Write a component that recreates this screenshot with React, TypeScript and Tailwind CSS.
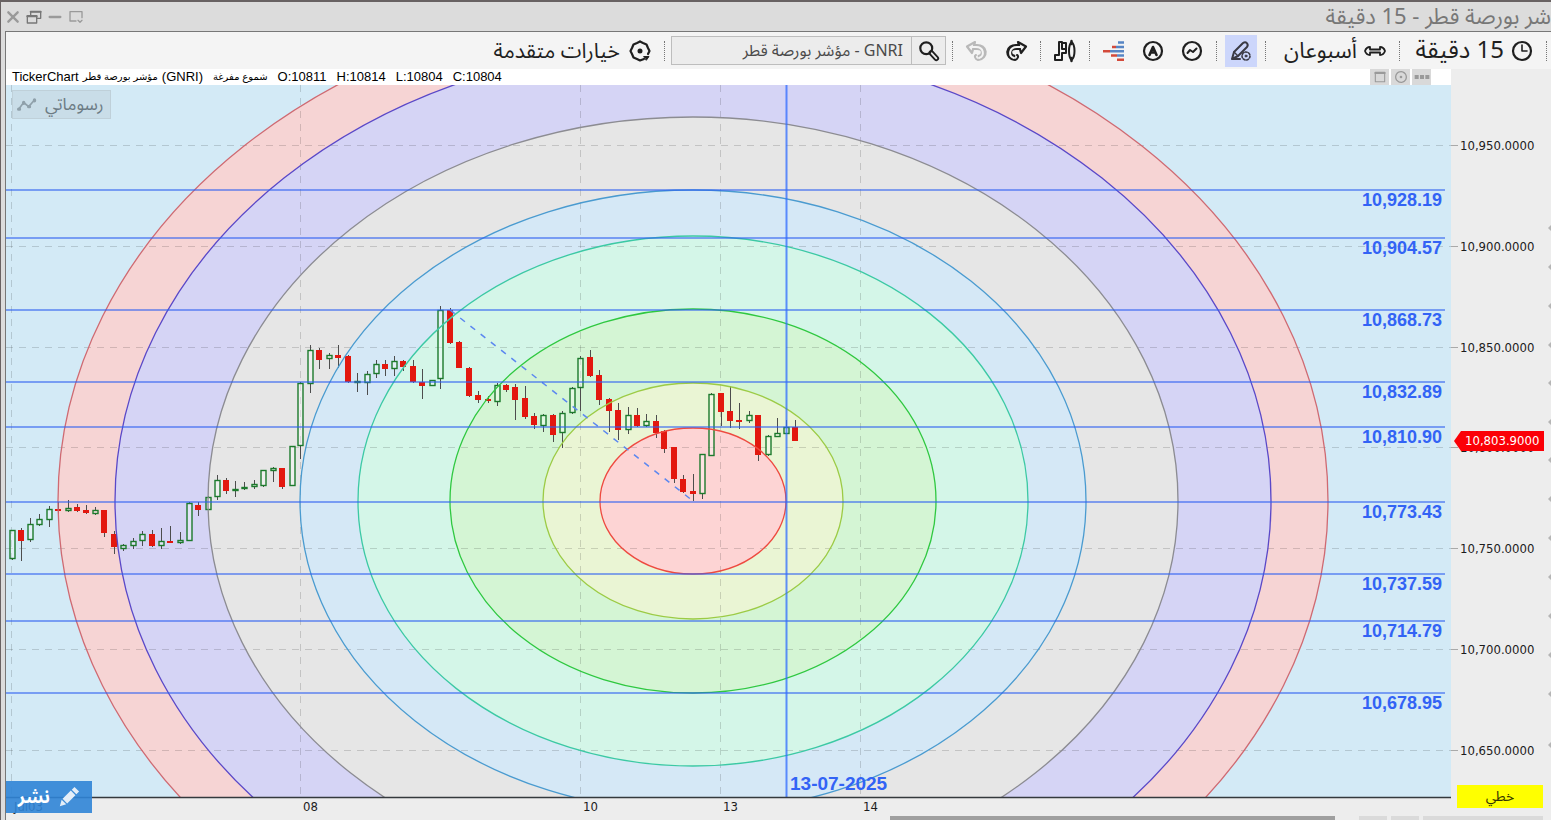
import type { ReactNode } from 'react';

// x, high, body top, body bottom, low, direction
type Candle = [number, number, number, number, number, 'u' | 'd'];

interface Ring {
  rx: number;
  ry: number;
  fill: string;
  stroke: string;
}

const CENTER = { x: 693, y: 501 };

const rings: Ring[] = [
  { rx: 635, ry: 502, fill: '#f6d4d4', stroke: '#cf6a72' },
  { rx: 578, ry: 457, fill: '#d5d4f5', stroke: '#5a48c8' },
  { rx: 485, ry: 384, fill: '#e6e6e6', stroke: '#8c8c92' },
  { rx: 393, ry: 311, fill: '#d5e8f6', stroke: '#4a9bd0' },
  { rx: 335, ry: 265, fill: '#d4f6e8', stroke: '#3cc9a4' },
  { rx: 243, ry: 192, fill: '#d4f5d4', stroke: '#2fc840' },
  { rx: 150, ry: 118, fill: '#eaf5d4', stroke: '#9ccb45' },
  { rx: 93, ry: 73, fill: '#fdd4d4', stroke: '#ee4a40' },
];

const levels = [
  { y: 190, label: '10,928.19' },
  { y: 238, label: '10,904.57' },
  { y: 310, label: '10,868.73' },
  { y: 382, label: '10,832.89' },
  { y: 427, label: '10,810.90' },
  { y: 502, label: '10,773.43' },
  { y: 574, label: '10,737.59' },
  { y: 621, label: '10,714.79' },
  { y: 693, label: '10,678.95' },
];

const prices = [
  { y: 146, label: '10,950.0000' },
  { y: 247, label: '10,900.0000' },
  { y: 348, label: '10,850.0000' },
  { y: 448, label: '10,800.0000' },
  { y: 549, label: '10,750.0000' },
  { y: 650, label: '10,700.0000' },
  { y: 751, label: '10,650.0000' },
];

const days = [
  { x: 12, label: 'Jul03' },
  { x: 301, label: '08' },
  { x: 581, label: '10' },
  { x: 721, label: '13' },
  { x: 861, label: '14' },
];

const candles: Candle[] = [
  [12, 530, 530, 559, 560, 'u'],
  [21, 528, 530, 541, 561, 'd'],
  [30, 518, 524, 540, 542, 'u'],
  [39, 514, 519, 525, 526, 'u'],
  [49, 506, 509, 520, 527, 'u'],
  [58, 502, 509, 511, 514, 'd'],
  [68, 500, 508, 511, 512, 'u'],
  [77, 504, 507, 511, 512, 'd'],
  [86, 505, 510, 513, 514, 'd'],
  [95, 507, 510, 514, 515, 'u'],
  [104, 510, 510, 533, 537, 'd'],
  [114, 531, 534, 547, 554, 'd'],
  [123, 544, 545, 549, 551, 'u'],
  [133, 538, 541, 546, 549, 'u'],
  [142, 531, 534, 541, 546, 'u'],
  [152, 530, 534, 546, 547, 'd'],
  [161, 528, 541, 546, 549, 'u'],
  [170, 526, 541, 543, 543, 'd'],
  [180, 532, 540, 543, 544, 'u'],
  [189, 502, 503, 541, 541, 'u'],
  [198, 502, 505, 510, 516, 'd'],
  [208, 496, 497, 510, 510, 'u'],
  [217, 475, 480, 497, 500, 'u'],
  [226, 478, 480, 491, 494, 'd'],
  [235, 481, 489, 491, 497, 'u'],
  [244, 482, 487, 488, 490, 'u'],
  [254, 480, 484, 487, 489, 'u'],
  [263, 470, 470, 486, 487, 'u'],
  [273, 467, 468, 471, 482, 'u'],
  [282, 468, 468, 487, 489, 'd'],
  [292, 446, 446, 486, 486, 'u'],
  [300, 382, 383, 446, 459, 'u'],
  [310, 345, 350, 384, 393, 'u'],
  [319, 348, 350, 360, 369, 'd'],
  [329, 353, 355, 359, 369, 'u'],
  [338, 345, 355, 358, 368, 'd'],
  [348, 355, 356, 382, 383, 'd'],
  [357, 373, 381, 383, 392, 'u'],
  [367, 371, 374, 383, 395, 'u'],
  [376, 360, 364, 374, 378, 'u'],
  [385, 360, 364, 369, 376, 'd'],
  [394, 356, 361, 369, 376, 'u'],
  [403, 360, 361, 367, 371, 'd'],
  [413, 360, 366, 382, 383, 'd'],
  [422, 369, 382, 386, 399, 'd'],
  [432, 380, 380, 386, 386, 'u'],
  [440, 306, 310, 379, 389, 'u'],
  [450, 308, 310, 343, 344, 'd'],
  [459, 341, 342, 368, 368, 'd'],
  [469, 367, 368, 396, 397, 'd'],
  [478, 391, 395, 400, 403, 'd'],
  [488, 396, 399, 401, 403, 'd'],
  [497, 383, 385, 402, 406, 'u'],
  [506, 384, 385, 390, 392, 'd'],
  [515, 384, 387, 400, 420, 'd'],
  [525, 386, 398, 417, 419, 'd'],
  [534, 413, 416, 425, 429, 'd'],
  [543, 414, 415, 426, 432, 'u'],
  [553, 414, 415, 435, 442, 'd'],
  [562, 411, 413, 433, 448, 'u'],
  [572, 387, 388, 413, 414, 'u'],
  [580, 356, 358, 388, 411, 'u'],
  [590, 350, 357, 376, 377, 'd'],
  [599, 370, 375, 400, 405, 'd'],
  [609, 398, 399, 411, 432, 'd'],
  [618, 403, 410, 430, 440, 'd'],
  [628, 407, 415, 430, 434, 'u'],
  [637, 408, 415, 426, 427, 'd'],
  [646, 414, 421, 426, 427, 'u'],
  [656, 415, 421, 433, 438, 'd'],
  [664, 430, 431, 449, 453, 'd'],
  [674, 447, 447, 479, 483, 'd'],
  [683, 475, 479, 492, 493, 'd'],
  [693, 474, 491, 494, 501, 'd'],
  [702, 454, 454, 494, 499, 'u'],
  [711, 393, 394, 456, 456, 'u'],
  [721, 393, 393, 412, 426, 'd'],
  [730, 386, 411, 421, 428, 'd'],
  [739, 403, 420, 422, 429, 'd'],
  [749, 411, 415, 421, 423, 'u'],
  [758, 415, 415, 455, 461, 'd'],
  [768, 435, 436, 455, 456, 'u'],
  [777, 418, 433, 437, 437, 'u'],
  [786, 420, 427, 434, 434, 'u'],
  [795, 420, 427, 441, 441, 'd'],
];

const CandleMark = ({ candle }: { candle: Candle }) => {
  const [x, high, top, bottom, low, dir] = candle;
  const up = dir === 'u';
  return (
    <g>
      <path
        d={`M${x + 0.5} ${high}V${top}M${x + 0.5} ${bottom}V${low}`}
        stroke="#4d4d4d"
      />
      {up ? (
        <rect
          x={x - 2}
          y={top + 0.5}
          width={5}
          height={Math.max(bottom - top - 1, 1)}
          fill="#ffffff"
          fillOpacity={0.35}
          stroke="#1c7a2c"
          strokeWidth={1.4}
        />
      ) : (
        <rect x={x - 3} y={top} width={6} height={bottom - top} fill="#e3180f" />
      )}
    </g>
  );
};

const Chart = () => (
  <svg
    viewBox="6 85 1445 735"
    className="block h-auto w-full"
    role="img"
    aria-label="GNRI"
  >
    <defs>
      <clipPath id="plot">
        <rect x="6" y="85" width="1445" height="712" />
      </clipPath>
    </defs>
    <rect x="6" y="85" width="1445" height="712" fill="#d3eaf6" />
    <g clipPath="url(#plot)">
      {rings.map(r => (
        <ellipse
          key={r.rx}
          cx={CENTER.x}
          cy={CENTER.y}
          rx={r.rx}
          ry={r.ry}
          fill={r.fill}
        />
      ))}
      <g stroke="#000000" strokeOpacity="0.15" strokeDasharray="7 6">
        {prices.map(p => (
          <path key={p.y} d={`M6 ${p.y - 0.5}H1451`} />
        ))}
        {days.map(d => (
          <path key={d.x} d={`M${d.x - 0.5} 85V797`} />
        ))}
      </g>
      {candles.map(c => (
        <CandleMark key={c[0]} candle={c} />
      ))}
      {rings.map(r => (
        <ellipse
          key={r.rx}
          cx={CENTER.x}
          cy={CENTER.y}
          rx={r.rx}
          ry={r.ry}
          fill="none"
          stroke={r.stroke}
          strokeWidth="1.3"
        />
      ))}
      <path
        d="M450 310L693 501"
        stroke="#5b87f0"
        strokeWidth="1.5"
        strokeDasharray="6 7"
      />
      {levels.map(l => (
        <path
          key={l.y}
          d={`M6 ${l.y}H1445`}
          stroke="#2f62f2"
          strokeOpacity="0.75"
          strokeWidth="1.6"
        />
      ))}
      <path
        d="M786.5 85V797"
        stroke="#2f6bff"
        strokeOpacity="0.75"
        strokeWidth="2"
      />
    </g>
    <g
      fill="#3263f5"
      fontFamily="Liberation Sans, sans-serif"
      fontSize="18"
      fontWeight="700"
    >
      {levels.map(l => (
        <text key={l.y} x="1442" y={l.y + 16} textAnchor="end">
          {l.label}
        </text>
      ))}
      <text x="790" y="790" fontSize="19">
        13-07-2025
      </text>
    </g>
    <path d="M6 797.5H1451" stroke="#34393d" strokeWidth="1.6" />
    <g
      fill="#1c1c1c"
      fontFamily="DejaVu Sans Condensed, Noto Sans, sans-serif"
      fontSize="13"
    >
      {days.map(d => (
        <text key={d.x} x={d.x + 2} y="811">
          {d.label}
        </text>
      ))}
    </g>
  </svg>
);

const PriceAxis = () => (
  <svg
    viewBox="1451 69 100 751"
    className="block h-auto w-full"
    fontFamily="DejaVu Sans Condensed, Noto Sans, sans-serif"
    fontSize="13"
  >
    {prices.map(p => (
      <g key={p.y}>
        <path d={`M1451 ${p.y - 0.5}H1458`} stroke="#a9a9a9" />
        <text x="1460" y={p.y + 4} fill="#1c1c1c">
          {p.label}
        </text>
      </g>
    ))}
    {[228, 267, 306, 345, 383, 422, 460, 499, 538, 577, 616, 655, 694, 745].map(
      y => (
        <path key={y} d={`M1551 ${y - 3}L1548 ${y}L1551 ${y + 3}`} fill="#b5b5b5" />
      )
    )}
    <path d="M1454 441L1461 431H1544V451H1461Z" fill="#fb0007" />
    <text x="1465" y="445" fill="#ffffff">
      10,803.9000
    </text>
  </svg>
);

const Separator = () => (
  <span className="h-5 w-px shrink-0 border-l border-dotted border-[#777777]" />
);

interface IconProps {
  children: ReactNode;
  className?: string;
}

const Icon = ({ children, className = 'size-6' }: IconProps) => (
  <svg
    viewBox="0 0 24 24"
    className={`shrink-0 ${className}`}
    fill="none"
    stroke="currentColor"
    strokeWidth="2"
    strokeLinecap="round"
    strokeLinejoin="round"
    aria-hidden="true"
  >
    {children}
  </svg>
);

interface ToolButtonProps {
  label: string;
  children: ReactNode;
  className?: string;
}

const ToolButton = ({ label, children, className = '' }: ToolButtonProps) => (
  <button
    type="button"
    aria-label={label}
    className={`flex size-8 shrink-0 items-center justify-center ${className}`}
  >
    {children}
  </button>
);

// Outlined arrow that loops up from the bottom and points right
const LoopArrow = () => (
  <>
    <path d="M11 19C3 18 3 7 13 8H15" strokeWidth="6" strokeLinecap="butt" />
    <path d="M14 3L22 7.500L17 14Z" fill="#f4f4f4" strokeWidth="2.2" />
    <path d="M10 19C4 17 5 8 13 8H17" stroke="#f4f4f4" strokeWidth="2" />
    <path d="M11 21C14 20 15 17 13 16" strokeWidth="2" />
  </>
);

const Toolbar = () => (
  <div
    dir="rtl"
    className="flex h-[37px] items-center bg-[#f4f4f4] pr-1 text-[22px] leading-9 text-[#1f1f1f]"
  >
    <Separator />
    <button
      type="button"
      className="flex w-[146px] shrink-0 items-center gap-[6px] pr-3 text-2xl leading-9 whitespace-nowrap"
    >
      <Icon>
        <circle cx="12" cy="12" r="9" strokeWidth="2.2" />
        <path d="M12 6V12H17" strokeWidth="1.6" />
      </Icon>
      <span>15 دقيقة</span>
    </button>
    <Separator />
    <button
      type="button"
      className="flex w-[133px] shrink-0 items-center gap-[6px] pr-3 whitespace-nowrap"
    >
      <Icon>
        <path
          d="M2 12C3 9 5 8 7 8V10.500H17V8C19 8 21 9 22 12C21 15 19 16 17 16V13.500H7V16C5 16 3 15 2 12Z"
          strokeWidth="1.8"
        />
      </Icon>
      <span>أسبوعان</span>
    </button>
    <Separator />
    <div className="flex px-2">
      <ToolButton label="أدوات الرسم" className="bg-[#ccd6fb] text-[#3a3a44]">
        <Icon>
          <path d="M3 20L5 13L14 4C17 2 20 5 18 8L9 17L3 20H11" />
          <path d="M5 13L9 17" strokeWidth="1.4" />
          <circle
            cx="17"
            cy="17"
            r="4"
            fill="#ccd6fb"
            strokeWidth="1.6"
            strokeDasharray="2 1.5"
          />
          <circle cx="17" cy="17" r="1" fill="currentColor" strokeWidth="1" />
        </Icon>
      </ToolButton>
    </div>
    <Separator />
    <div className="flex gap-[7px] px-2">
      <ToolButton label="المؤشرات">
        <Icon>
          <circle cx="12" cy="12" r="9" strokeWidth="2.2" />
          <path d="M7.500 14L10 11L13 13L16.500 9.500" />
        </Icon>
      </ToolButton>
      <ToolButton label="التنبيهات">
        <Icon>
          <circle cx="12" cy="12" r="9" strokeWidth="2.2" />
          <path d="M8.500 16L12 8L15.500 16M10 13.500H14" strokeWidth="2.6" />
        </Icon>
      </ToolButton>
      <ToolButton label="عمق السوق">
        <Icon>
          <g strokeLinecap="butt" strokeWidth="2.6">
            <path d="M16 3.500H22M14 8H22M8 12.300H22M15 16.500H22" stroke="#5785c4" />
            <path
              d="M10 8H14M1 12.300H8M9 16.500H15M15 20.700H22"
              stroke="#d34a3a"
            />
          </g>
        </Icon>
      </ToolButton>
    </div>
    <Separator />
    <div className="flex px-2">
      <ToolButton label="نوع الرسم">
        <Icon>
          <path d="M6 3H9V10H13V14H9V21H2V16H6Z" />
          <path d="M9 4H13V10" />
          <path d="M18.500 3C21 5 21.500 7 21.500 12C21.500 17 21 19 18.500 21C16.500 19 16 17 16 12C16 7 16.500 5 18.500 3Z" />
          <path d="M18.500 2V5M18.500 19V22" strokeWidth="2.4" />
        </Icon>
      </ToolButton>
    </div>
    <Separator />
    <div className="flex gap-[7px] px-2">
      <ToolButton label="إعادة">
        <Icon>
          <LoopArrow />
        </Icon>
      </ToolButton>
      <ToolButton label="تراجع" className="text-[#b9b9b9]">
        <Icon className="size-6 -scale-x-100">
          <LoopArrow />
        </Icon>
      </ToolButton>
    </div>
    <Separator />
    <div className="px-[6px]">
      <div className="flex h-[29px] w-[275px] items-stretch border border-[#bdbdbd] bg-[#ececec]">
        <button
          type="button"
          aria-label="بحث"
          className="flex w-[34px] shrink-0 items-center justify-center border-l border-[#bdbdbd]"
        >
          <Icon className="size-[22px]">
            <circle cx="9" cy="9" r="6.500" strokeWidth="2.4" />
            <path d="M14.500 14L20 20" strokeWidth="6" />
            <path d="M15 14.500L20 20" stroke="#ececec" strokeWidth="2" />
          </Icon>
        </button>
        <input
          type="text"
          dir="rtl"
          aria-label="رمز السهم"
          defaultValue="GNRI - مؤشر بورصة قطر"
          className="min-w-0 flex-1 bg-transparent px-2 text-base text-[#4a4a4a] outline-none"
        />
      </div>
    </div>
    <Separator />
    <button
      type="button"
      className="flex shrink-0 items-center gap-2 pr-3 text-[21px] leading-9 whitespace-nowrap"
    >
      <Icon>
        <path
          d="M12 2.500L15 4L18.500 5.500L20 9L21.500 12L20 15M16 20L12 21.500L9 20L5.500 18.500L4 15L2.500 12L4 9L5.500 5.500L9 4L12 2.500"
          strokeWidth="2.2"
        />
        <circle cx="12" cy="12" r="1.500" fill="currentColor" />
        <path
          d="M16 17.500H21L18.500 21Z"
          fill="currentColor"
          strokeWidth="1"
        />
      </Icon>
      <span>خيارات متقدمة</span>
    </button>
  </div>
);

const TitleBar = () => (
  <header className="flex h-[31px] items-center justify-between border-t-2 border-[#686263] pl-1 text-[#9a9a9a]">
    <div className="flex items-center gap-[5px]">
      <button type="button" aria-label="إغلاق">
        <Icon className="size-4">
          <path d="M5 5L19 19M19 5L5 19" strokeWidth="3.500" />
        </Icon>
      </button>
      <button type="button" aria-label="استعادة">
        <Icon className="size-4 text-[#777777]">
          <path d="M2 10H16V21H2ZM7 9V4H22V14H17" />
          <path d="M2 11H16M7 4H22" strokeWidth="3" />
        </Icon>
      </button>
      <button type="button" aria-label="تصغير">
        <Icon className="size-4">
          <path d="M4 12H20" strokeWidth="3.500" />
        </Icon>
      </button>
      <button type="button" aria-label="تثبيت">
        <Icon className="size-4">
          <path d="M12 18H3V4H21V13M15 17L18 20L21 17" />
        </Icon>
      </button>
    </div>
    <h1
      dir="rtl"
      className="text-[22px] leading-7 whitespace-nowrap text-[#777777]"
    >
      شر بورصة قطر - 15 دقيقة
    </h1>
  </header>
);

const PanelButton = ({ label, children }: ToolButtonProps) => (
  <button
    type="button"
    aria-label={label}
    className="flex h-4 w-[19px] items-center justify-center bg-[#d9d9d9] text-[#9a9a9a]"
  >
    <Icon className="size-4">{children}</Icon>
  </button>
);

const InfoBar = () => (
  <div className="flex h-4 items-center justify-between bg-white pr-5 pl-[6px] font-['Liberation_Sans','DejaVu_Sans',sans-serif] text-[13px] leading-4 text-black">
    <div className="flex items-center gap-[10px] whitespace-nowrap">
      <p className="flex items-center gap-1">
        <span>TickerChart</span>
        <span dir="rtl" className="text-[10px]">
          مؤشر بورصة قطر
        </span>
        <span>(GNRI)</span>
      </p>
      <span dir="rtl" className="text-[10px]">
        شموع مفرغة
      </span>
      <span>O:10811</span>
      <span>H:10814</span>
      <span>L:10804</span>
      <span>C:10804</span>
    </div>
    <div className="flex gap-[2px]">
      <PanelButton label="تكبير">
        <path d="M5 5H19V19H5Z" strokeWidth="1.600" />
        <path d="M5 6H19" strokeWidth="3" />
      </PanelButton>
      <PanelButton label="إعدادات">
        <circle cx="12" cy="12" r="8" strokeDasharray="4 1" />
        <circle cx="12" cy="12" r="1" fill="currentColor" />
      </PanelButton>
      <PanelButton label="المزيد">
        <path
          d="M1 12H7M9 12H15M17 12H23"
          strokeWidth="6"
          strokeLinecap="butt"
        />
      </PanelButton>
    </div>
  </div>
);

const App = () => (
  <div className="flex h-screen flex-col overflow-hidden border-l border-[#686263] bg-[#dcdcdc] font-['Noto_Sans_Arabic','Noto_Kufi_Arabic','Liberation_Sans','DejaVu_Sans',sans-serif]">
    <TitleBar />
    <main className="relative ml-1 flex min-h-0 flex-1 flex-col overflow-hidden border-t border-l border-[#777777] bg-[#ededed]">
      <Toolbar />
      <div className="flex items-start">
        <div className="min-w-0 flex-1">
          <InfoBar />
          <div className="relative">
            <Chart />
            <button
              type="button"
              className="absolute top-[5px] left-[6px] flex h-[29px] items-center gap-2 border border-[#bfd0d9] bg-[#c9dde8] pr-[6px] pl-1 text-[17px] leading-6 text-[#6c7b84]"
            >
              <Icon className="size-5 text-[#8fa0aa]">
                <path d="M2 17L8 9L14 14L21 6" />
                <path d="M2 17H3M8 9V10M14 14H15M21 6V7" strokeWidth="4" />
              </Icon>
              <span dir="rtl">رسوماتي</span>
            </button>
            <button
              type="button"
              className="absolute bottom-[7px] left-0 flex h-8 w-[86px] items-center justify-end gap-2 bg-[#2f84d6]/90 pr-3 text-lg font-bold text-white"
            >
              <span dir="rtl">نشر</span>
              <svg
                viewBox="0 0 24 24"
                className="size-[22px]"
                fill="#e4eef8"
                aria-hidden="true"
              >
                <path d="M2 22L4 15L9 20ZM5 14L14 5L19 10L10 19ZM15 4L18 1L23 6L20 9Z" />
              </svg>
            </button>
          </div>
        </div>
        <aside className="relative w-[100px] shrink-0">
          <PriceAxis />
          <button
            type="button"
            className="absolute right-2 bottom-3 h-[23px] w-[86px] bg-[#ffff00] text-sm leading-5 text-[#333300]"
          >
            خطي
          </button>
        </aside>
      </div>
      <div className="absolute inset-x-0 bottom-0 flex h-1 pr-2">
        <span className="ml-[57.5%] w-[29%] bg-[#9f9f9f]" />
        <span className="ml-auto flex w-[184px] gap-1">
          <span className="w-7 bg-[#dadada]" />
          <span className="w-7 bg-[#dadada]" />
          <span className="flex-1 bg-[#dadada]" />
        </span>
      </div>
    </main>
  </div>
);

export default App;
